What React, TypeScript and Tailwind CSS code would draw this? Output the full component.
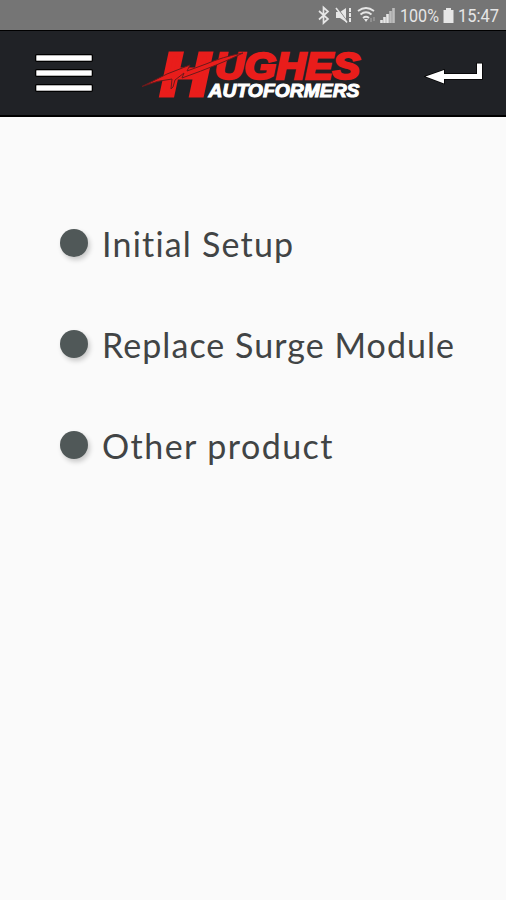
const menuItems = [
  { label: "Initial Setup", spacing: "tracking-[1.2px]" },
  { label: "Replace Surge Module", spacing: "tracking-[1.05px]" },
  { label: "Other product", spacing: "tracking-[1.45px]" },
];

function StatusBar() {
  return (
    <div className="flex h-[30px] items-center bg-[#757575] pl-[317px] text-[#e6e6e6]">
      <svg width="83" height="20" viewBox="317 6 83 20" fill="none" stroke="currentColor">
        {/* bluetooth */}
        <path d="M319 12l9 8-4.5 4V8.500l4.500 4-9 8" strokeWidth="1.700" />
        {/* muted speaker */}
        <path d="M336 13h4l6-4v14l-6-4h-4z" fill="currentColor" stroke="none" />
        <path d="M337.500 9l10 14" stroke="#757575" strokeWidth="1.200" />
        <path d="M336 9l11 14.500" strokeWidth="1.600" />
        <path d="M350 9v15" strokeWidth="2" strokeDasharray="4 1" />
        {/* wifi */}
        <path d="M358 12q8-6 16 0M360.500 15.500q5.500-4.500 11 0M363 19q3-2.500 6 0" strokeWidth="1.800" />
        <path d="M364 20h4l-2 3z" fill="currentColor" stroke="none" />
        <path d="M371 19v4M374 18v4" stroke="#999" strokeWidth="1.500" />
        {/* signal */}
        <path d="M381.500 21v3M384.500 18v6M387.500 15v9" strokeWidth="2.600" />
        <path d="M390.500 12v12M393.500 9v15" stroke="#bdbdbd" strokeWidth="2.600" />
      </svg>
      <svg width="106" height="24" viewBox="400 4 106 24" fill="currentColor" className="font-[Roboto,sans-serif]">
        <text x="400" y="23" fontSize="18" textLength="39" lengthAdjust="spacingAndGlyphs">100%</text>
        <path d="M446 9h5v2h2.500v13h-10V11h2.500z" />
        <text x="458" y="23" fontSize="18" textLength="41" lengthAdjust="spacingAndGlyphs">15:47</text>
      </svg>
    </div>
  );
}

function Logo() {
  return (
    <svg
      width="226"
      height="60"
      viewBox="140 43 226 60"
      className="overflow-visible font-['Liberation_Sans',Arial,sans-serif] font-bold italic"
    >
      <g fill="#e91d1b" stroke="#e91d1b">
        <text x="161" y="94.500" fontSize="59" strokeWidth="5" textLength="48" lengthAdjust="spacingAndGlyphs">H</text>
        <text x="215" y="78.500" fontSize="36.500" strokeWidth="2.500" textLength="145" lengthAdjust="spacingAndGlyphs">UGHES</text>
      </g>
      <path
        d="M142 86.500L167 74 190 65 187 71 206 64Q222 57 243 53Q221 64 182 78L184 73 175 80 173 87 171 89 172 79Q158 80 142 86.500z"
        fill="#e91d1b"
        stroke="#6b1a1b"
        strokeWidth="1"
      />
      <text x="208.500" y="96.500" fontSize="18" fill="white" stroke="white" strokeWidth="1" textLength="151" lengthAdjust="spacingAndGlyphs">
        AUTOFORMERS
      </text>
    </svg>
  );
}

function Header() {
  return (
    <header className="flex h-[87px] items-center border-t border-b-2 border-black bg-[#202226] pl-9">
      <button aria-label="Menu" className="flex w-14 flex-col gap-[9px]">
        <span className="h-[6px] rounded-[1px] border border-[#b5b5b5] bg-white ring-1 ring-black" />
        <span className="h-[6px] rounded-[1px] border border-[#b5b5b5] bg-white ring-1 ring-black" />
        <span className="h-[6px] rounded-[1px] border border-[#b5b5b5] bg-white ring-1 ring-black" />
      </button>
      <div className="ml-12">
        <Logo />
      </div>
      <button aria-label="Back" className="ml-[58px]">
        <svg width="62" height="30" viewBox="424 58 62 30">
          <path
            d="M425.500 76.500L444 70v4h33V63.500h5V79h-38v4.500z"
            fill="white"
            stroke="black"
            strokeWidth="1.500"
            paintOrder="stroke"
          />
        </svg>
      </button>
    </header>
  );
}

export default function App() {
  return (
    <div className="h-[900px] w-[506px] overflow-hidden bg-[#fafafa]">
      <StatusBar />
      <Header />
      <main className="flex flex-col gap-[51px] pt-[101px] pl-[60px]">
        {menuItems.map((item) => (
          <div key={item.label} className="flex h-[50px] items-center gap-[14px]">
            <span className="size-7 shrink-0 rounded-full bg-[#505858] shadow-[2px_3px_5px_rgba(0,0,0,0.2)]" />
            <span
              className={`pt-[2px] font-[Lato,Carlito,sans-serif] text-[34px] leading-[50px] whitespace-nowrap text-[#414445] ${item.spacing}`}
            >
              {item.label}
            </span>
          </div>
        ))}
      </main>
    </div>
  );
}
